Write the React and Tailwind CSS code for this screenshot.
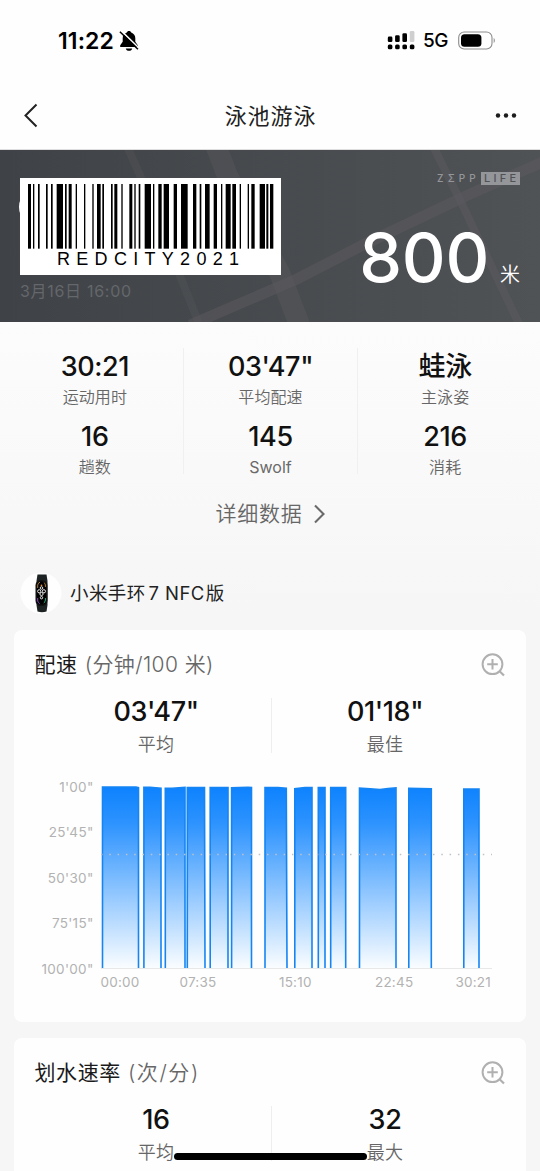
import React from "react";

const BARS = [
  [84, 93], [99, 103], [114, 119], [138, 143], [153, 158], [170, 189], [195, 200], [206, 215],
  [227, 231], [252, 256], [277, 281], [291, 302], [307, 312], [333, 338], [343, 352], [364, 368],
  [388, 397], [403, 407], [416, 421], [434, 453], [459, 463], [475, 485], [491, 507], [521, 531],
  [543, 563], [579, 589], [599, 604], [615, 629], [641, 651], [663, 667], [677, 692], [697, 708],
  [719, 723], [743, 747], [754, 764], [779, 795], [799, 805], [810, 820],
];

function StatusBar() {
  return (
    <div className="flex h-[82px] items-center justify-between pl-[58px] pr-[44px]">
      <div className="flex items-center gap-[3px]">
        <span className="w-[58px] whitespace-nowrap text-[23px] font-semibold leading-[28px] tracking-[0.100px] text-black">11:22</span>
        <svg width="20" height="22" viewBox="0 0 20 22">
          <path d="M10 1c-1.200 0-2 .6-2.200 1.500C5.200 3.400 3.700 5.500 3.700 8.300v3.500L1.200 15.300V17h17.600v-1.700L16.300 11.800V8.300C16.300 5.500 14.800 3.400 12.200 2.500 12 1.600 11.200 1 10 1Z" fill="#000" />
          <path d="M6.800 18.400h6.400c-.3 1.500-1.500 2.300-3.200 2.300s-2.900-.8-3.200-2.300Z" fill="#000" />
          <path d="M2 .6 20 18" stroke="#fff" strokeWidth="1.600" />
          <path d="M.9 1.800 18.900 19.300" stroke="#000" strokeWidth="1.500" />
        </svg>
      </div>
      <div className="flex items-center">
        <svg width="28" height="20" viewBox="0 0 28 20">
          <rect x=".8" y="5.600" width="4.600" height="5.400" rx="1.300" />
          <rect x="8.100" y="4.300" width="4.600" height="6.700" rx="1.300" />
          <rect x="15.400" y="2.200" width="4.600" height="8.800" rx="1.300" />
          <rect x="22.800" y="0" width="4.600" height="11" rx="1.300" fill="#cfcfcf" />
          <rect x=".8" y="13.600" width="4.600" height="4.600" rx="1.500" />
          <rect x="8.100" y="13.600" width="4.600" height="4.600" rx="1.500" />
          <rect x="15.400" y="13.600" width="4.600" height="4.600" rx="1.500" />
          <rect x="22.800" y="13.600" width="4.600" height="4.600" rx="1.500" />
        </svg>
        <span className="ml-[8px] w-[35px] text-[19px] font-medium leading-[24px] tracking-[-0.400px] text-black">5G</span>
        <svg width="38" height="20" viewBox="0 0 38 20">
          <rect x=".7" y="1" width="33.300" height="17" rx="5.500" fill="none" stroke="#8c8c8c" strokeWidth="1.100" />
          <rect x="3" y="3.200" width="20.400" height="12.600" rx="3.600" />
          <path d="M35.700 7c1.500.7 1.500 4.300 0 5Z" fill="#8c8c8c" />
        </svg>
      </div>
    </div>
  );
}

function NavBar() {
  return (
    <div className="flex h-[68px] items-center justify-between border-b border-[#dedede] pl-[22px] pr-[22px]">
      <svg width="18" height="26" viewBox="0 0 18 26" fill="none" stroke="#222" strokeWidth="2">
        <path d="M14.500 1.500 3.500 12.500l11 11" />
      </svg>
      <h1 className="ml-[7px] text-[22px] leading-[30px] tracking-[0.900px] text-[#222]">泳池游泳</h1>
      <svg width="24" height="8" viewBox="0 0 24 8" fill="#1c1c1c">
        <circle cx="4" cy="3.500" r="2.200" />
        <circle cx="12" cy="3.500" r="2.200" />
        <circle cx="20" cy="3.500" r="2.200" />
      </svg>
    </div>
  );
}

function Barcode() {
  return (
    <div className="relative h-[97px] w-[261px] bg-white pt-[6px]">
      <svg className="block" width="261" height="65" viewBox="60 0 783 195" preserveAspectRatio="none">
        {BARS.map(([a, b]) => (
          <rect key={a} x={a} y="0" width={b - a} height="194" fill="#000" />
        ))}
      </svg>
      <div className="whitespace-nowrap pl-[37px] font-['Liberation_Sans'] text-[18px] leading-[20px] tracking-[6.300px] text-black">REDCITY2021</div>
    </div>
  );
}

function Hero() {
  return (
    <section className="relative h-[172px] shrink-0 overflow-hidden bg-linear-to-r from-[#3f4246] to-[#505356]">
      <svg className="absolute inset-0" width="540" height="172" fill="none" stroke="#5b5a60" strokeOpacity=".5">
        <path d="M190 175 297 129 363 95 470 44 545 11" strokeWidth="11" />
        <path d="M433-4 461 52 520 176" strokeWidth="8" />
        <path d="M216-4 228 27 280 124 300 176" strokeWidth="21" strokeOpacity=".4" />
        <path d="M127-4 142 30 200 176" strokeWidth="8" strokeOpacity=".25" />
      </svg>
      <div className="absolute left-[19px] top-[37px] size-[40px] rounded-full bg-white" />
      <div className="relative flex h-full justify-between pl-[20px] pr-[20px]">
        <div className="pt-[28px]">
          <Barcode />
          <div className="mt-[5px] text-[16px] leading-[22px] tracking-[0.700px] text-[#64676b]">3月16日 16:00</div>
        </div>
        <div className="flex flex-col items-end pt-[22px]">
          <div className="flex h-[13px] items-center text-[10px] font-medium leading-[13px] text-[#94969a]">
            <span className="mr-[1px] tracking-[4.200px]">ZΣPP</span>
            <span className="flex h-[13px] w-[39px] items-center bg-[#94969a] pl-[3px] text-[11px] tracking-[3.300px] text-[#505356]">LIFE</span>
          </div>
          <div className="mt-[30px] flex items-baseline whitespace-nowrap text-white">
            <span className="text-[68px] font-medium leading-[84px] tracking-[-0.300px]">800</span>
            <span className="ml-[11px] text-[20px] font-[350] leading-[24px]">米</span>
          </div>
        </div>
      </div>
    </section>
  );
}

function Stat({ value, label }) {
  return (
    <div className="flex h-[70px] flex-col items-center">
      <div className="text-[27px] font-medium leading-[36px] tracking-[-0.400px] text-[#111]">{value}</div>
      <div className={label === "Swolf" ? "text-[16px] leading-[24px] text-[#6a6a6a]" : "text-[16px] font-[350] leading-[24px] tracking-[0.100px] text-[#666]"}>{label}</div>
    </div>
  );
}

function Summary() {
  const cols = [
    [["30:21", "运动用时"], ["16", "趟数"]],
    [["03'47\"", "平均配速"], ["145", "Swolf"]],
    [["蛙泳", "主泳姿"], ["216", "消耗"]],
  ];
  return (
    <section className="pl-[8px] pr-[8px] pt-[26px]">
      <div className="grid grid-cols-3">
        {cols.map((c) => (
          <div key={c[0][0]} className="h-[126px] border-l border-[#f0f0f0] pt-px first:border-transparent first:pr-[2px]">
            {c.map(([v, l]) => (
              <Stat key={l} value={v} label={l} />
            ))}
          </div>
        ))}
      </div>
      <div className="ml-[2px] mt-[24px] flex h-[32px] items-center justify-center gap-[10px] text-[21px] font-[350] leading-[32px] tracking-[0.800px] text-[#666]">
        <span>详细数据</span>
        <svg width="14" height="22" viewBox="0 0 14 22" fill="none" stroke="#6a6a6a" strokeWidth="2.100">
          <path d="M2 2.500 10.500 11 2 19.500" />
        </svg>
      </div>
    </section>
  );
}

function Device() {
  return (
    <div className="mb-px mt-[42px] flex h-[42px] items-center pl-[20px]">
      <svg width="42" height="42" viewBox="0 0 42 42">
        <circle cx="21" cy="21" r="20.500" fill="#fefefe" />
        <path d="M17.500 2.500h9l1 6.500v24l-1 6.500q-4.500 1.400-9 0l-1-6.500V9Z" fill="#1c2322" />
        <rect x="15.500" y="8" width="12" height="26" rx="5.500" fill="#111" />
        <rect x="17" y="9.500" width="9" height="23" rx="4" fill="#000" />
        <path d="M17.700 16v-3q.6-2.500 2.300-2.800M25.400 15v-2q-.6-2.200-1.600-2.600" stroke="#a87d35" strokeWidth="1" fill="none" />
        <path d="M17.700 26v3q.6 2 2 2.600" stroke="#8c4bc0" strokeWidth="1" fill="none" />
        <path d="M25.400 26v2q-.6 2.600-1.600 3.200" stroke="#2da57c" strokeWidth="1" fill="none" />
        <g fill="none" stroke="#e4e4e4" strokeWidth="1">
          <circle cx="21.500" cy="16" r="1.300" />
          <circle cx="19.200" cy="19.300" r="1.600" />
          <circle cx="23.900" cy="19.300" r="1.600" />
          <circle cx="21.500" cy="22" r="1.600" />
          <circle cx="21.500" cy="25.700" r="1.200" />
        </g>
        <circle cx="21.500" cy="13.300" r=".9" fill="#e08a3a" />
      </svg>
      <span className="ml-[8px] whitespace-nowrap text-[18.500px] leading-[28px] tracking-[0.400px] text-[#222]">小米手环<span className="ml-[3px]">7 NFC</span><span className="ml-[1px]">版</span></span>
    </div>
  );
}

function ZoomIcon() {
  return (
    <svg width="26" height="26" viewBox="0 0 26 26" fill="none" stroke="#b0b0b0" strokeWidth="2">
      <circle cx="12.500" cy="12.200" r="9.900" />
      <path d="M12.500 6.900v10.600M7.200 12.200h10.600" />
      <path d="M19.300 19 24 23.500" strokeWidth="2.300" />
    </svg>
  );
}

function CardHead({ title, unit, stats }) {
  return (
    <>
      <div className="flex h-[70px] items-center justify-between pl-[20.500px] pr-[20px]">
        <h2 className="flex whitespace-nowrap text-[21px] leading-[30px] text-[#1a1a1a]">
          <span className="tracking-[0.600px]">{title}</span>
          <span className="ml-[7px] font-[350] text-[#666]">{unit}</span>
        </h2>
        <ZoomIcon />
      </div>
      <div className="ml-[28px] mr-[26px] -mt-[2px] grid grid-cols-2">
        {stats.map(([v, l]) => (
          <div key={l} className="flex h-[55px] flex-col items-center border-l border-[#eeeeee] pr-[2px] first:border-transparent">
            <div className="-mt-[4px] text-[27px] font-medium leading-[36px] tracking-[-0.400px] text-[#111]">{v}</div>
            <div className="mt-px shrink-0 text-[18px] font-[350] leading-[28px] tracking-[0.200px] text-[#666]">{l}</div>
          </div>
        ))}
      </div>
    </>
  );
}

const SEGMENTS = [
  "M102.500 968V787H136L138.500 787.700V968",
  "M143.900 968V787.300L150 787.300 161 788.300V968",
  "M165.300 968V788.300L172 788.300 185 787.400V968",
  "M187.300 968V787.500H204.500L205 968",
  "M210.200 968V787.500H228V968",
  "M231.600 968V787.700L248 787.300 251.500 787.600V968",
  "M265 968V787.500H278L286.300 788.300 287 968",
  "M294.800 968V788.600L305 787.500H312V968",
  "M318.300 968V787.500H325V968",
  "M330.700 968V787.500H345.700V968",
  "M359.500 968V788L370 788.800 380 789.600 388 788.500 396 787.800V968",
  "M408.800 968V788.300L431.300 788.700V968",
  "M463.800 968V789H479V968",
];

function PaceChart() {
  const ys = [["1'00\"", 787], ["25'45\"", 832], ["50'30\"", 877.5], ["75'15\"", 923], ["100'00\"", 968.5]];
  const xs = [["00:00", 100.5], ["07:35", 179.5], ["15:10", 279], ["22:45", 375], ["30:21", 455.5]];
  return (
    <svg className="block" width="512" height="268" viewBox="14 753 512 268">
      <defs>
        <linearGradient id="pace" gradientUnits="userSpaceOnUse" x1="0" y1="787" x2="0" y2="968">
          <stop offset="0" stopColor="#0d82fe" />
          <stop offset=".2" stopColor="#2d93fe" />
          <stop offset="1" stopColor="#fafdff" />
        </linearGradient>
      </defs>
      <path d="M101 968.500H492" stroke="#e6e8ea" strokeWidth="1" />
      <g fill="url(#pace)" stroke="#1585f4" strokeWidth="1.600">
        {SEGMENTS.map((d) => (
          <path key={d} d={d} />
        ))}
      </g>
      <path d="M101 854.500H492" stroke="#bcc2c8" strokeWidth="1.500" strokeDasharray="1.500 6.800" />
      <g className="text-[13.500px]" fill="#b2b2b2">
        {ys.map(([t, y]) => (
          <text key={t} x="93.500" y={y + 5} textAnchor="end" letterSpacing=".3">{t}</text>
        ))}
        {xs.map(([t, x]) => (
          <text key={t} x={x} y="987" letterSpacing=".2">{t}</text>
        ))}
      </g>
    </svg>
  );
}

export default function App() {
  return (
    <div className="relative flex h-[1171px] w-[540px] flex-col overflow-hidden bg-[#f6f6f6] font-['Inter','Noto_Sans_CJK_SC',sans-serif]">
      <div className="shrink-0 bg-[#fefefe]">
        <StatusBar />
        <NavBar />
      </div>
      <Hero />
      <div className="shrink-0 bg-linear-to-b from-[#fcfcfc] to-[#f6f6f6] pb-px">
        <Summary />
        <Device />
      </div>
      <div className="mt-[14px] flex shrink-0 flex-col gap-[16px] px-[14px]">
        <section className="h-[392px] rounded-[8px] bg-[#fefefe]">
          <CardHead title="配速" unit={<span className="tracking-[0.400px]">(分钟/100 米)</span>} stats={[["03'47\"", "平均"], ["01'18\"", "最佳"]]} />
          <PaceChart />
        </section>
        <section className="h-[150px] rounded-t-[8px] bg-[#fefefe]">
          <CardHead title="划水速率" unit={<span className="tracking-[1.600px]">(次/分)</span>} stats={[["16", "平均"], ["32", "最大"]]} />
        </section>
      </div>
      <div className="absolute left-[174px] top-[1153px] h-[7px] w-[193px] rounded-full bg-black" />
    </div>
  );
}
